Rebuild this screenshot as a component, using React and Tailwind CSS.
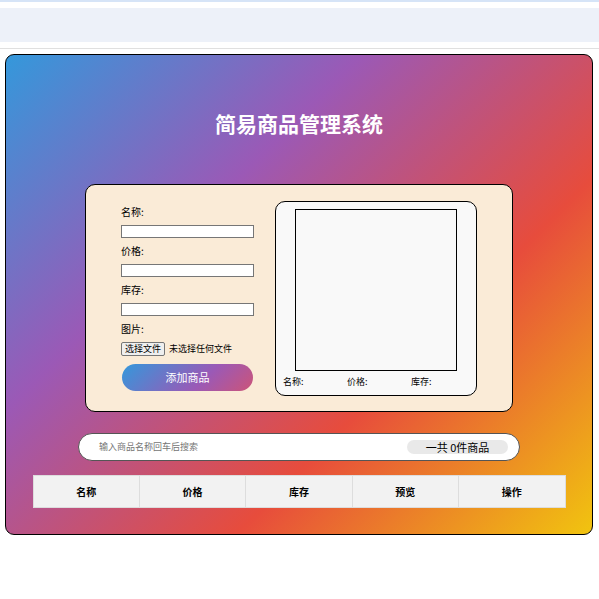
import React from "react";

const fields = ["名称:", "价格:", "库存:"];
const columns = ["名称", "价格", "库存", "预览", "操作"];

const App = () => {
  return (
    <div className="min-h-screen bg-white font-['Noto_Sans_CJK_SC','Noto_Sans',sans-serif] text-black">
      {/* browser-ish top bar */}
      <div className="h-[2px] bg-[#d6e4f7]"></div>
      <div className="mt-[6px] h-[34px] bg-[#edf1f9]"></div>
      <div className="mt-[6px] h-px bg-[#e0e0e0]"></div>

      {/* main card */}
      <div className="mt-[5px] ml-[5px] w-[588px] h-[481px] rounded-[9px] border border-black bg-[linear-gradient(135deg,#3498db,#9b59b6,#e74c3c,#f1c40f)] pt-[54px]">
        <h1 className="text-center text-[21px] leading-[28px] font-bold text-white">简易商品管理系统</h1>

        {/* form + preview */}
        <div className="mx-auto mt-[47px] flex h-[228px] w-[428px] items-center justify-between rounded-[10px] border border-black bg-[#faebd7] px-[35px]">
          <div className="w-[133px]">
            {fields.map((label) => (
              <div key={label}>
                <div className="mb-[7px] h-[12px] text-[10px] leading-[12px]">{label}</div>
                <div className="mb-[7px] h-[13px] w-full border border-[#767676] bg-white"></div>
              </div>
            ))}
            <div className="mb-[7px] h-[12px] text-[10px] leading-[12px]">图片:</div>
            <div className="flex h-[14px] items-center text-[9px] leading-[12px]">
              <span className="flex h-[14px] items-center border border-[#767676] bg-[#efefef] px-[3px] rounded-[2px]">选择文件</span>
              <span className="ml-[4px]">未选择任何文件</span>
            </div>
            <button className="mt-[8px] ml-px flex h-[27px] w-[131px] items-center justify-center rounded-full bg-[linear-gradient(135deg,#3498db,#9b59b6_62%,#cc5478)] text-[11px] text-white">
              添加商品
            </button>
          </div>

          <div className="flex h-[195px] w-[202px] flex-col items-center rounded-[10px] border border-black bg-[#f9f9f9] pt-[7px]">
            <div className="h-[162px] w-[162px] border border-black"></div>
            <div className="mt-[5px] flex self-start pl-[7px] text-[9px] leading-[12px]">
              <span className="w-[64px]">名称:</span>
              <span className="w-[64px]">价格:</span>
              <span className="w-[64px]">库存:</span>
            </div>
          </div>
        </div>

        {/* search */}
        <div className="mx-auto mt-[21px] flex h-[28px] w-[442px] items-center justify-between rounded-full border border-[#555] bg-white pl-[20px] pr-[11px]">
          <span className="text-[9px] text-[#757575]">输入商品名称回车后搜索</span>
          <span className="flex h-[14px] w-[101px] items-center justify-center rounded-full bg-[#e9e9e9] text-[11px] leading-[14px]">一共 0件商品</span>
        </div>

        {/* table header */}
        <table className="mx-auto mt-[14px] w-[533px] border-collapse">
          <thead>
            <tr className="h-[32px] bg-[#f2f2f2]">
              {columns.map((c) => (
                <th key={c} className="w-1/5 border border-[#dddddd] text-[10px] font-bold">{c}</th>
              ))}
            </tr>
          </thead>
        </table>
      </div>
    </div>
  );
};

export default App;
